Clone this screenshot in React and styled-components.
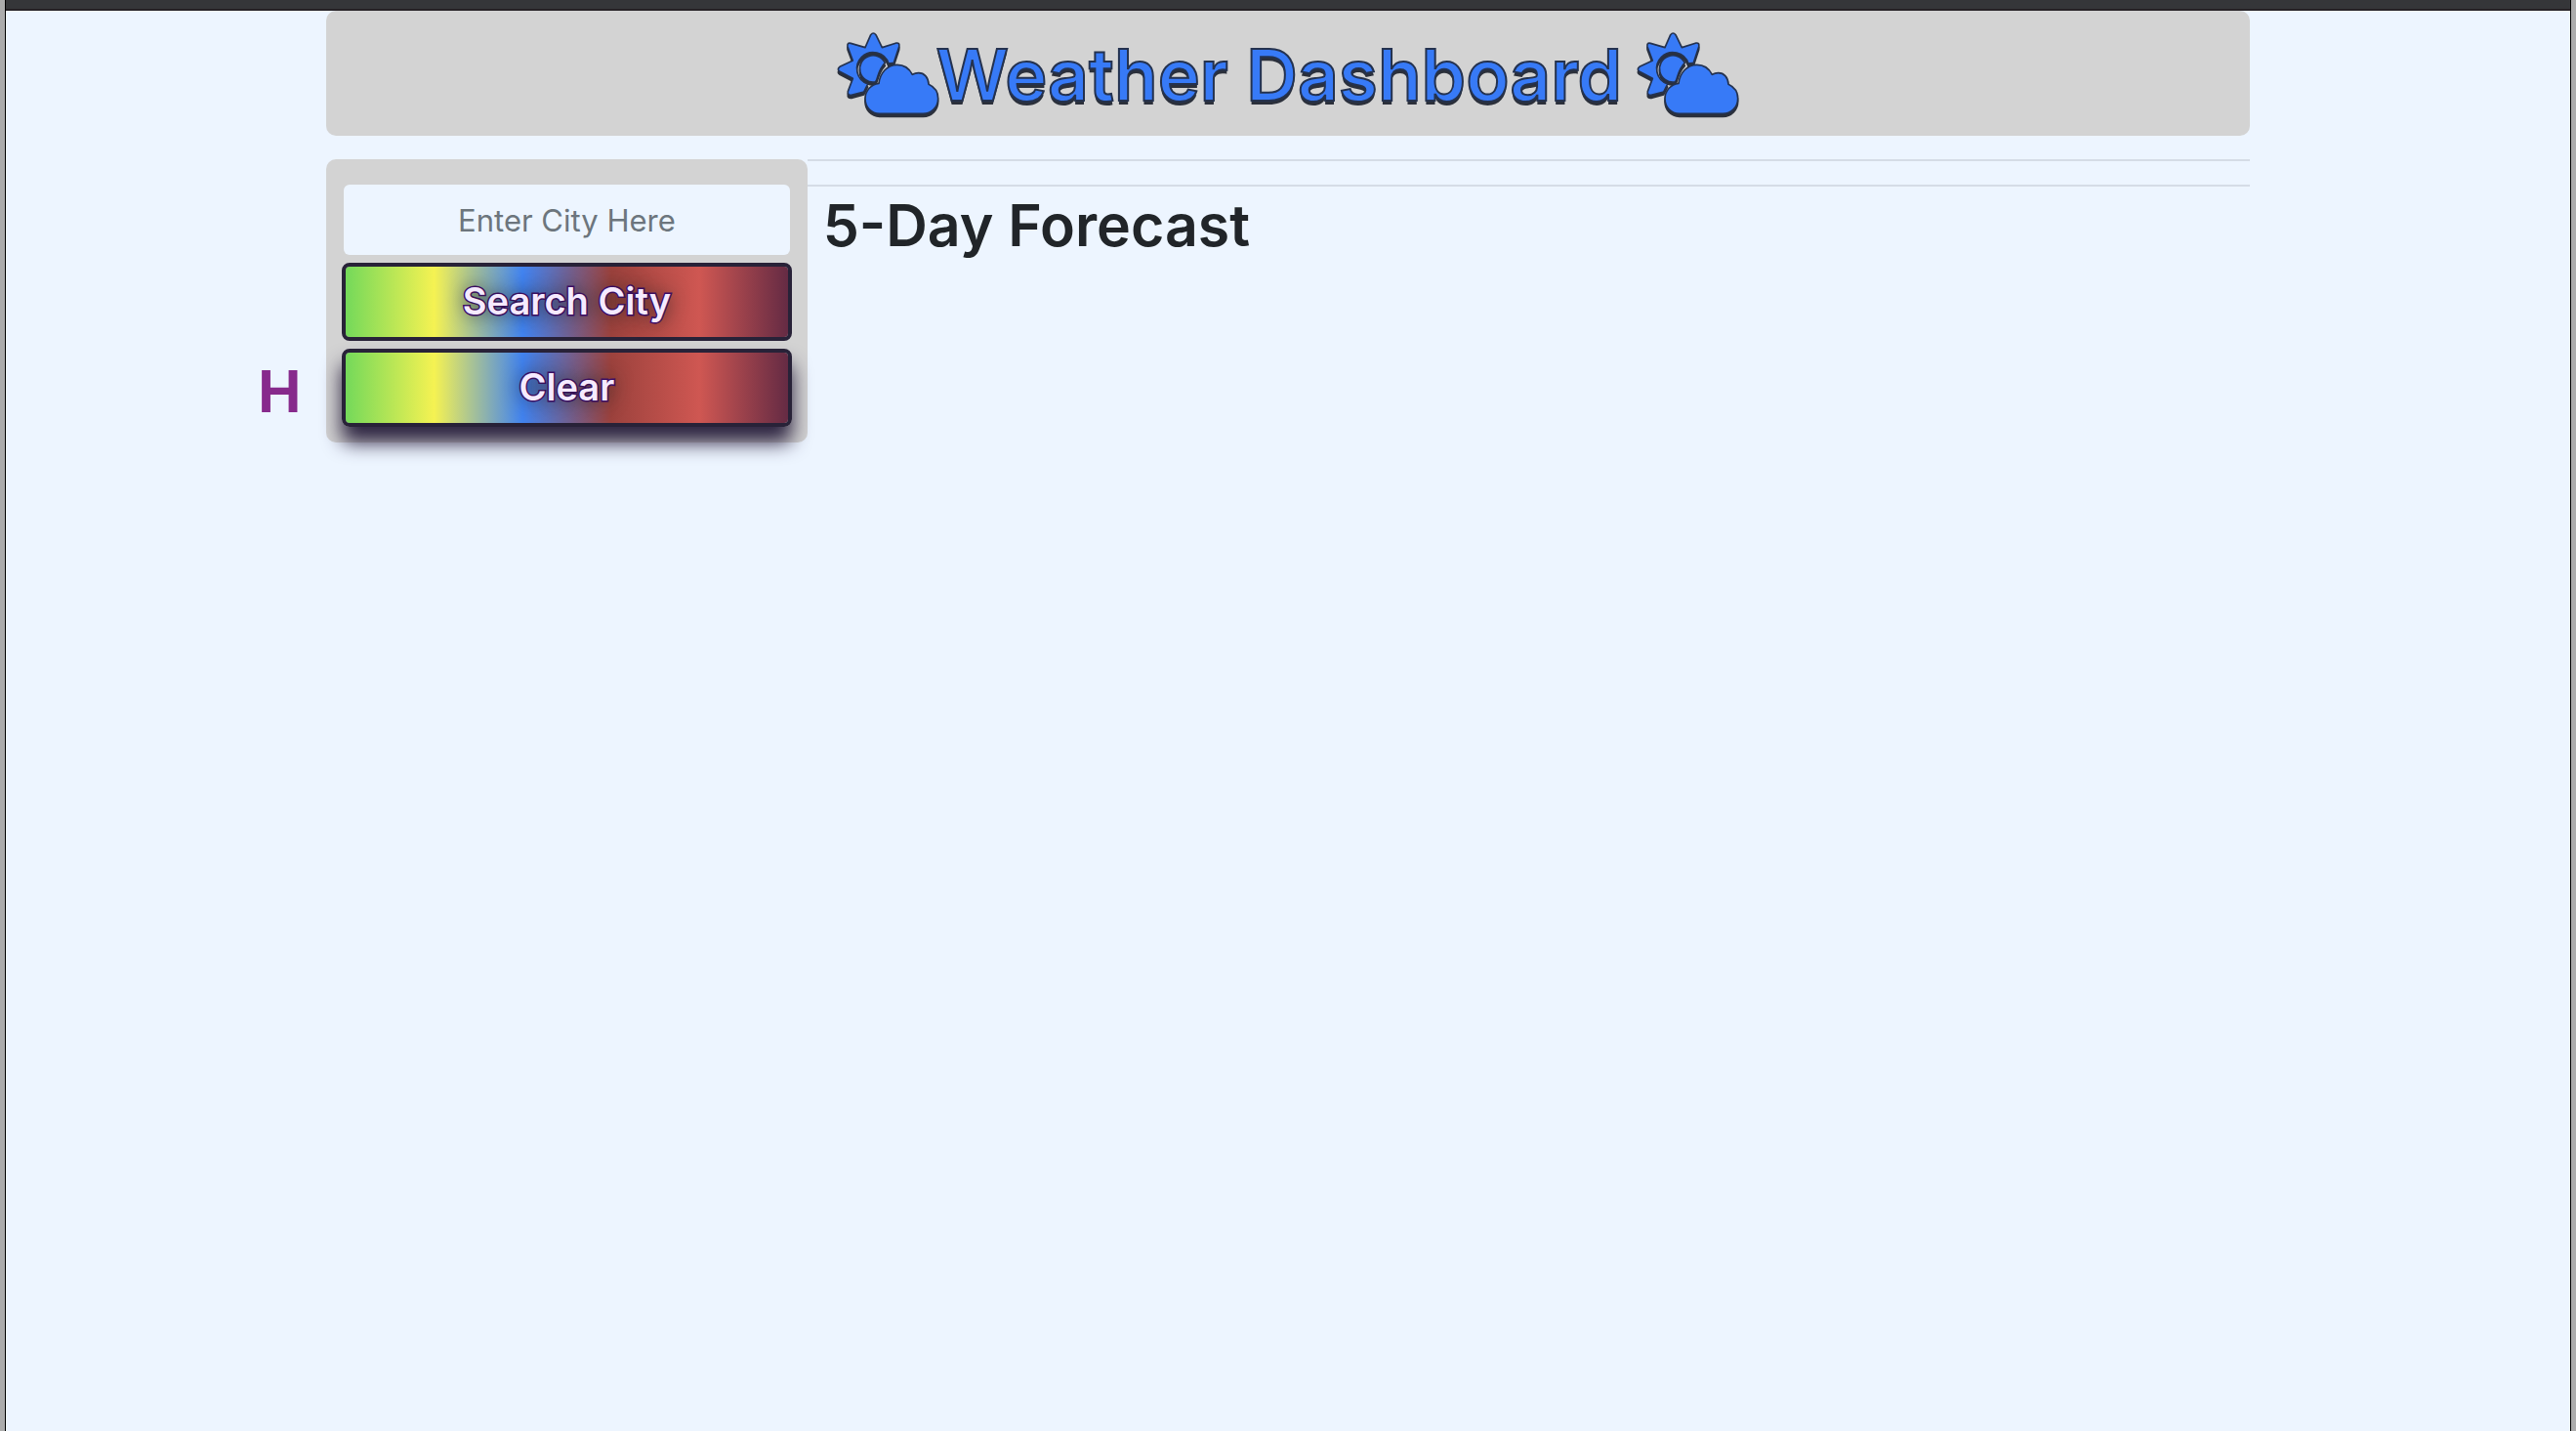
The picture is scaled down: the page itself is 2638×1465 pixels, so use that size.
import React from "react";
import styled, { createGlobalStyle } from "styled-components";

const GlobalStyle = createGlobalStyle`
  *, *::before, *::after { box-sizing: border-box; }
  body {
    margin: 0;
    background: #edf5ff;
    color: #212529;
    font-family: Inter, "Liberation Sans", sans-serif;
    line-height: 1.2;
  }
`;

const Frame = styled.div`
  min-height: 100vh;
  padding: 0 5px;
  background: #acacac;
  display: flex;
`;

const Page = styled.div`
  flex: 1;
  min-width: 0;
  border: solid #000;
  border-width: 0 1px;
  background: #edf5ff;
`;

const WindowBar = styled.div`
  height: 11px;
  background: #353639;
  border-bottom: 2px solid #262226;
`;

const Header = styled.header`
  width: 75%;
  height: 128px;
  margin: 0 auto 24px;
  display: flex;
  align-items: center;
  justify-content: center;
  background: #d3d3d3;
  border-radius: 10px;
`;

const Title = styled.h1`
  margin: 0;
  display: flex;
  align-items: center;
  white-space: pre;
  color: #377af7;
  font-size: 73px;
  font-weight: 600;
  line-height: 96px;
  -webkit-text-stroke: 2px #24324f;
  text-shadow: 0 4px 0 #2b303b;
`;

const TitleText = styled.span`
  padding-top: 4px;
  margin: 0 -4px;
`;

const IconArt = styled.svg`
  overflow: visible;
  flex: none;
  fill: #377af7;
  stroke: #24324f;
  stroke-width: 5px;
  stroke-linejoin: round;
  filter: drop-shadow(0 3px 0 #2b303b);
`;

const Body = styled.div`
  display: grid;
  grid-template-columns: 12.5% 18.75% 1fr 12.5%;
  align-items: start;
`;

const Ticker = styled.div`
  padding: 200px 26px 0 0;
  text-align: right;
  color: #872a8c;
  font-size: 59px;
  font-weight: 700;
  line-height: 76px;
`;

const SearchPanel = styled.form`
  display: flex;
  flex-direction: column;
  gap: 8px;
  padding: 26px 16px 16px;
  background: #d3d3d3;
  border-radius: 10px;
`;

const CityInput = styled.input`
  height: 72px;
  margin: 0 2px;
  padding: 0 24px;
  border: 0;
  border-radius: 6px;
  background: #edf5ff;
  color: #212529;
  font-family: inherit;
  font-size: 31px;
  text-align: center;
  &::placeholder { color: #6c757d; opacity: 1; }
`;

const RainbowButton = styled.button`
  height: 80px;
  padding: 0 0 2px;
  border: 4px solid #282238;
  border-radius: 8px;
  background: linear-gradient(to right, #74d95a, #f5f252, #4183f0, #9c423d, #cf5752, #652b44) padding-box;
  color: #f5eaff;
  font-family: inherit;
  font-size: 38px;
  font-weight: 600;
  line-height: 48px;
  -webkit-text-stroke: 3px #430c72;
  paint-order: stroke fill;
  text-shadow: 0 0 20px #222;
  box-shadow: ${(p) => (p.$raised ? "0 16px 20px #2c2340" : "none")};
`;

const Main = styled.main`
  min-width: 0;
`;

const Rule = styled.hr`
  margin: 0 0 24px;
  border: 0;
  border-top: 2px solid #d5dce6;
`;

const ForecastTitle = styled.h2`
  margin: -20px 0 0;
  padding-left: 16px;
  font-size: 59px;
  font-weight: 600;
  line-height: 72px;
`;

function WeatherIcon() {
  return (
    <IconArt width={105} height={84} viewBox="51 96 315 252" aria-hidden="true">
      <path d="M155 104 Q163 94 171 104 L190 143 L234 129 Q245 128 242 141 L226 190 L210 192 A50 50 0 1 0 146 255 L134 279 L96 289 Q83 290 85 278 L100 238 L60 217 Q50 210 60 202 L100 183 L84 140 Q82 127 94 130 L138 143 Z" />
      <path d="M199 190 A41 41 0 1 0 168 249 C177 246 175 214 199 190 Z" />
      <path d="M182 346 C156 346 138 325 138 300 C138 276 156 256 180 253 C184 220 206 196 236 196 C256 196 274 208 283 226 C290 222 296 221 302 221 C320 221 332 235 333 256 C350 264 362 280 362 299 C362 326 342 346 316 346 Z" />
    </IconArt>
  );
}

export default function App() {
  return (
    <Frame>
      <GlobalStyle />
      <Page>
        <WindowBar />
        <Header>
          <Title>
            <WeatherIcon />
            <TitleText>Weather Dashboard </TitleText>
            <WeatherIcon />
          </Title>
        </Header>
        <Body>
          <Ticker>H</Ticker>
          <SearchPanel onSubmit={(e) => e.preventDefault()}>
            <CityInput type="text" placeholder="Enter City Here" aria-label="City" />
            <RainbowButton type="submit">Search City</RainbowButton>
            <RainbowButton type="reset" $raised>Clear</RainbowButton>
          </SearchPanel>
          <Main>
            <Rule />
            <Rule />
            <ForecastTitle>5-Day Forecast</ForecastTitle>
          </Main>
        </Body>
      </Page>
    </Frame>
  );
}
